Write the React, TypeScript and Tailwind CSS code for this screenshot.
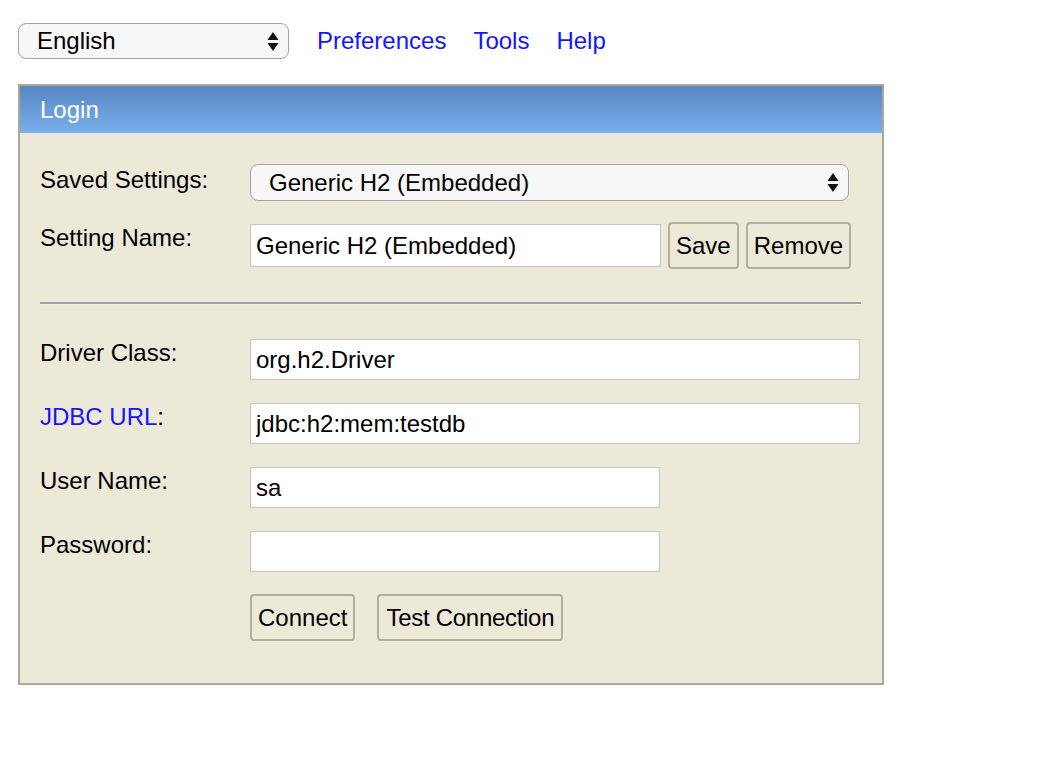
import React from 'react';

const font = { fontFamily: '"Liberation Sans", Arial, Helvetica, sans-serif' };

function Arrows() {
  return (
    <svg width="12" height="21" viewBox="0 0 12 21" className="shrink-0">
      <path d="M6 1 L11.5 9 L0.5 9 Z" fill="#111" />
      <path d="M0.5 12 L11.5 12 L6 20 Z" fill="#111" />
    </svg>
  );
}

function FakeSelect({ value, className }: { value: string; className: string }) {
  return (
    <div
      className={`flex items-center justify-between rounded-[8px] border-[1.5px] border-[#a3a3a3] bg-[#f7f7f7] pr-[9px] ${className}`}
    >
      <span className="whitespace-nowrap">{value}</span>
      <Arrows />
    </div>
  );
}

function Field({ value, width }: { value: string; width: string }) {
  return (
    <input
      readOnly
      defaultValue={value}
      className={`${width} h-[41px] border border-[#c4c4c4] bg-white px-[5px] text-[24px] text-black outline-none`}
    />
  );
}

function Btn({ label, className = 'px-[6px]' }: { label: string; className?: string }) {
  return (
    <button
      className={`h-[47px] rounded-[4px] border-2 border-[#b3ae9e] bg-[#ece9d8] text-[24px] leading-[28px] text-black ${className}`}
    >
      {label}
    </button>
  );
}

export default function App() {
  return (
    <div style={font} className="min-h-[762px] bg-white pl-[18px] pt-[23px] text-[24px] leading-[28px] text-black">
      {/* Top bar */}
      <div className="flex h-[36px] items-center">
        <FakeSelect value="English" className="h-[36px] w-[271px] pl-[18px]" />
        <div className="ml-[28px] flex gap-[27px] text-[#1414ff]">
          <span>Preferences</span>
          <span>Tools</span>
          <span>Help</span>
        </div>
      </div>

      {/* Login panel */}
      <div className="mt-[25px] w-[866px] border-2 border-[#aca899]">
        <div className="flex h-[47px] items-center bg-linear-to-b from-[#5885c4] to-[#7ab0ed] pl-[20px] text-white">
          Login
        </div>

        <div className="bg-[#ece9d8] pb-[42px] pl-[20px] pr-[21px] pt-[31px]">
          <div className="grid grid-cols-[210px_1fr]">
            <div className="pt-[2px]">Saved Settings:</div>
            <FakeSelect value="Generic H2 (Embedded)" className="h-[37px] w-[599px] pl-[18px]" />
          </div>

          <div className="mt-[21px] grid grid-cols-[210px_1fr]">
            <div className="pt-[2px]">Setting Name:</div>
            <div className="flex items-center gap-[7px]">
              <input
                readOnly
                defaultValue="Generic H2 (Embedded)"
                className="h-[43px] w-[411px] border border-[#c4c4c4] bg-white px-[5px] text-[24px] text-black outline-none"
              />
              <Btn label="Save" />
              <Btn label="Remove" />
            </div>
          </div>

          <div className="mt-[33px] h-[3px] border-b border-[#f4f2ea] bg-[#a0a0a0]" />

          <div className="mt-[34px] grid grid-cols-[210px_1fr]">
            <div>Driver Class:</div>
            <Field value="org.h2.Driver" width="w-[610px]" />
          </div>

          <div className="mt-[23px] grid grid-cols-[210px_1fr]">
            <div>
              <span className="text-[#1414ff]">JDBC URL</span>:
            </div>
            <Field value="jdbc:h2:mem:testdb" width="w-[610px]" />
          </div>

          <div className="mt-[23px] grid grid-cols-[210px_1fr]">
            <div>User Name:</div>
            <Field value="sa" width="w-[410px]" />
          </div>

          <div className="mt-[23px] grid grid-cols-[210px_1fr]">
            <div>Password:</div>
            <Field value="" width="w-[410px]" />
          </div>

          <div className="mt-[22px] grid grid-cols-[210px_1fr]">
            <div />
            <div className="flex gap-[22px]">
              <Btn label="Connect" />
              <Btn label="Test Connection" className="w-[186px] px-0 tracking-[-0.3px]" />
            </div>
          </div>
        </div>
      </div>
    </div>
  );
}
